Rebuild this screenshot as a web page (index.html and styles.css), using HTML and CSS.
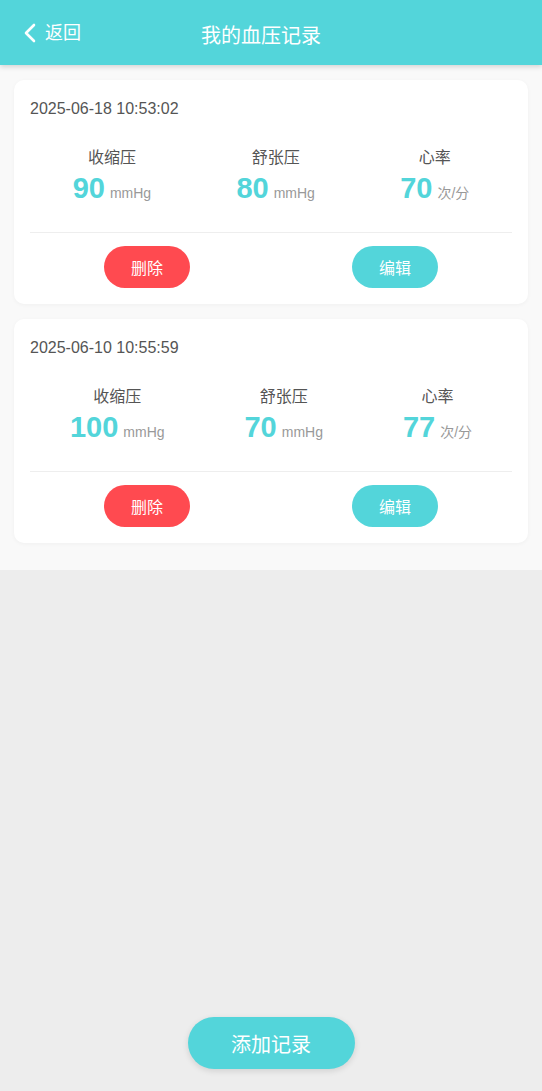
FILE: index.html
```html
<!DOCTYPE html>
<html lang="zh-CN">
<head>
    <meta charset="UTF-8">
    <meta name="viewport" content="width=device-width, initial-scale=1.0">
    <title>我的血压记录</title>
    <link rel="stylesheet" href="styles.css">
</head>
<body>
    <div class="header">
        <a class="back" href="#">
            <svg class="back-icon" width="12" height="20" viewBox="0 0 12 20">
                <path d="M10 2 L2 10 L10 18" fill="none" stroke="#fff" stroke-width="2.6" stroke-linecap="round" stroke-linejoin="round"/>
            </svg>
            返回
        </a>
        <div class="title">我的血压记录</div>
    </div>

    <div class="list">
        <div class="card">
            <div class="date">2025-06-18 10:53:02</div>
            <div class="stats">
                <div class="stat">
                    <div class="label">收缩压</div>
                    <div class="value">90<span class="unit">mmHg</span></div>
                </div>
                <div class="stat">
                    <div class="label">舒张压</div>
                    <div class="value">80<span class="unit">mmHg</span></div>
                </div>
                <div class="stat">
                    <div class="label">心率</div>
                    <div class="value">70<span class="unit">次/分</span></div>
                </div>
            </div>
            <div class="actions">
                <button class="btn btn-delete">删除</button>
                <button class="btn btn-edit">编辑</button>
            </div>
        </div>

        <div class="card">
            <div class="date">2025-06-10 10:55:59</div>
            <div class="stats">
                <div class="stat">
                    <div class="label">收缩压</div>
                    <div class="value">100<span class="unit">mmHg</span></div>
                </div>
                <div class="stat">
                    <div class="label">舒张压</div>
                    <div class="value">70<span class="unit">mmHg</span></div>
                </div>
                <div class="stat">
                    <div class="label">心率</div>
                    <div class="value">77<span class="unit">次/分</span></div>
                </div>
            </div>
            <div class="actions">
                <button class="btn btn-delete">删除</button>
                <button class="btn btn-edit">编辑</button>
            </div>
        </div>
    </div>

    <div class="footer">
        <button class="add-btn">添加记录</button>
    </div>
</body>
</html>
```

FILE: styles.css
```css
html, body {
    height: 100%;
}
body {
    margin: 0;
    font-family: 'Liberation Sans', 'Noto Sans CJK SC', sans-serif;
    background: #ededed;
    color: #555;
    display: flex;
    flex-direction: column;
}
.header {
    height: 65px;
    background: #53d5da;
    display: flex;
    align-items: center;
    justify-content: center;
    padding-right: 20px;
    position: relative;
    box-shadow: 0 2px 5px rgba(0,0,0,0.15);
    z-index: 1;
    flex-shrink: 0;
}
.back {
    position: absolute;
    left: 24px;
    top: 23px;
    display: flex;
    align-items: center;
    gap: 9px;
    color: #fff;
    font-size: 18px;
    text-decoration: none;
    line-height: 20px;
}
.title {
    color: #fff;
    font-size: 20px;
    margin-top: 4px;
}
.list {
    background: #f9f9f9;
    padding: 15px 14px 12px;
}
.card {
    background: #fff;
    border-radius: 10px;
    padding: 17px 16px 16px;
    margin-bottom: 15px;
    box-shadow: 0 1px 4px rgba(0,0,0,0.04);
}
.date {
    font-size: 16px;
    line-height: 24px;
    color: #555;
}
.stats {
    display: flex;
    justify-content: space-around;
    margin-top: 26px;
    padding-bottom: 22px;
    border-bottom: 1px solid #eee;
}
.stat {
    text-align: center;
}
.label {
    font-size: 16px;
    line-height: 22px;
    color: #555;
}
.value {
    font-size: 29px;
    font-weight: bold;
    color: #53d5da;
    line-height: 34px;
    margin-top: 2px;
}
.unit {
    font-size: 14px;
    font-weight: normal;
    color: #999;
    margin-left: 5px;
}
.actions {
    display: flex;
    justify-content: space-around;
    margin: 13px -7px 0;
}
.btn {
    width: 86px;
    height: 42px;
    border: none;
    border-radius: 21px;
    color: #fff;
    font-size: 16px;
    font-family: inherit;
    padding: 0;
}
.btn-delete {
    background: #ff4a50;
}
.btn-edit {
    background: #53d5da;
}
.footer {
    margin-top: auto;
    display: flex;
    justify-content: center;
    padding-bottom: 22px;
}
.add-btn {
    width: 167px;
    height: 52px;
    border: none;
    border-radius: 26px;
    background: #53d5da;
    color: #fff;
    font-size: 20px;
    font-family: inherit;
    box-shadow: 0 2px 6px rgba(0,0,0,0.12);
}
```
